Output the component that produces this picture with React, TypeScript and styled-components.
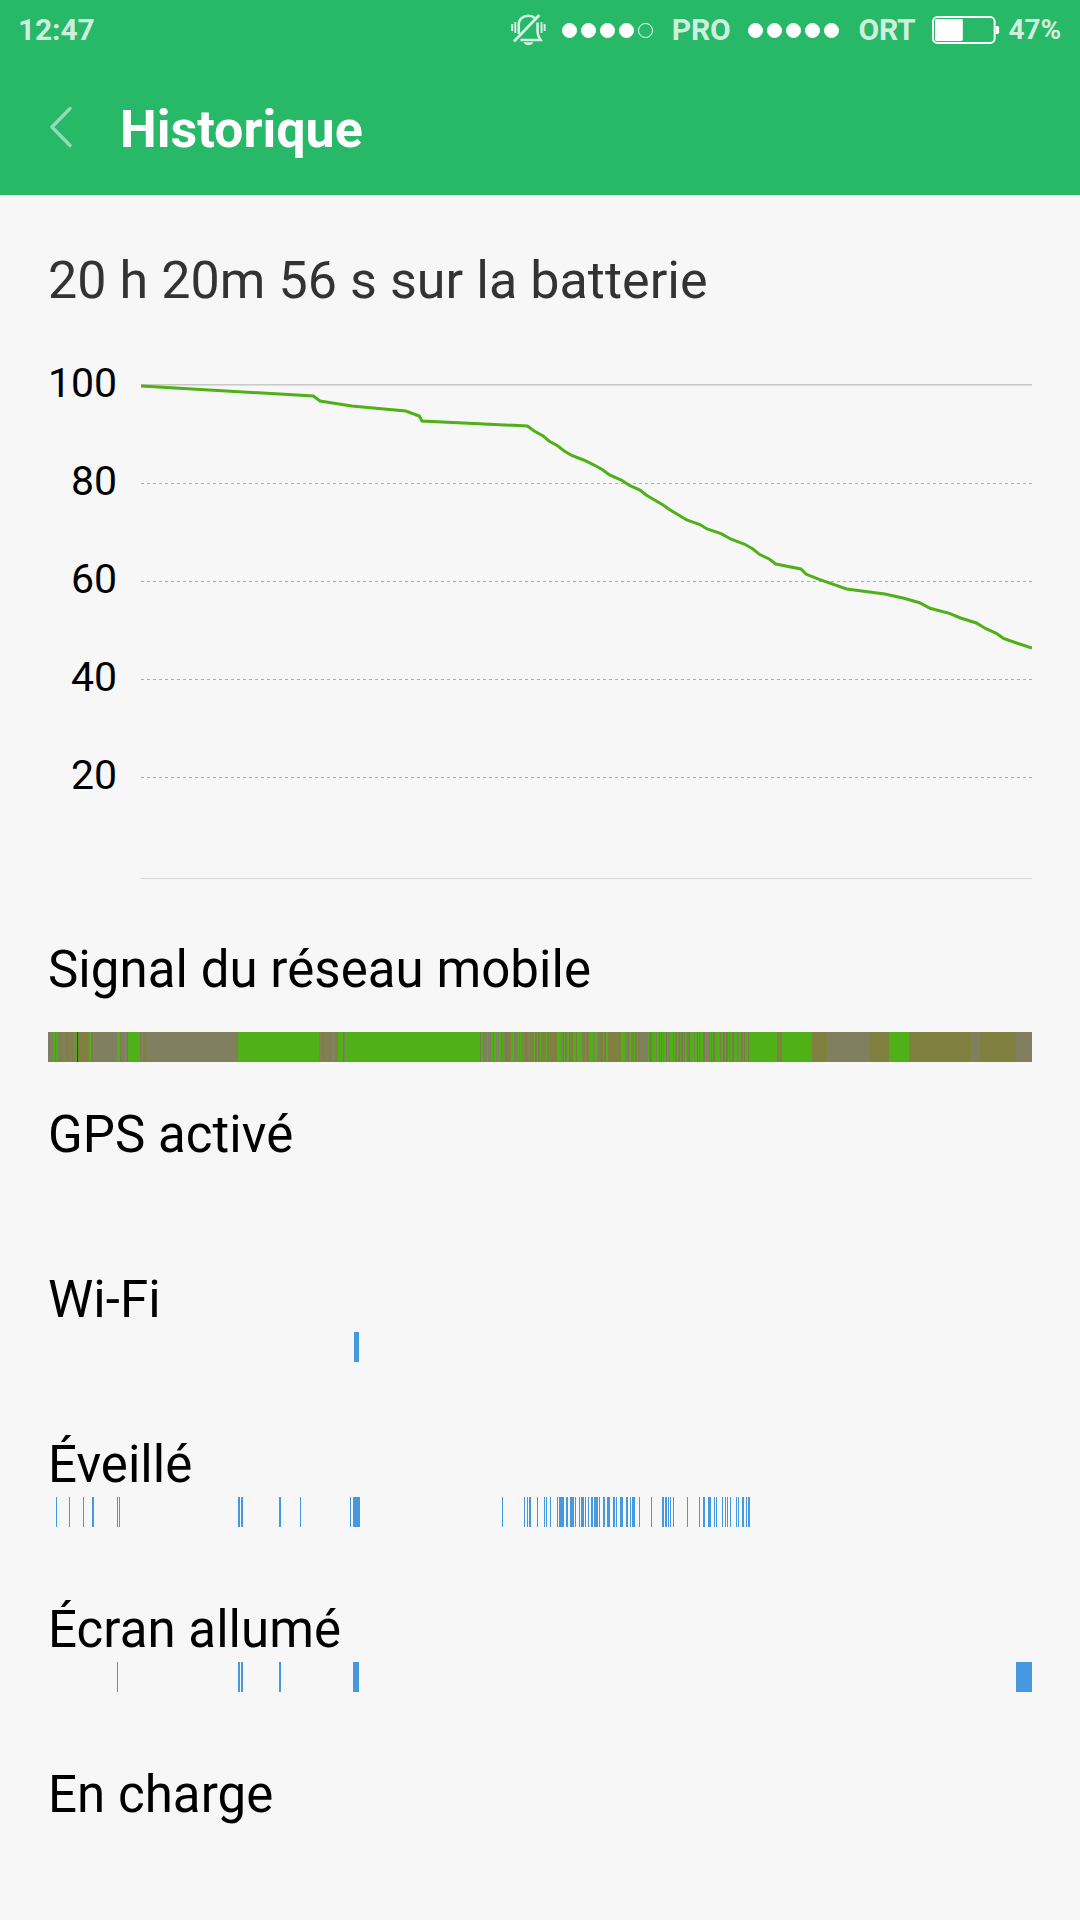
import React from "react";
import styled, { createGlobalStyle } from "styled-components";

const Global = createGlobalStyle`
  body { margin: 0; background: #f7f7f7; }
  * { box-sizing: border-box; }
`;

const Screen = styled.div`
  width: 1080px;
  height: 1920px;
  overflow: hidden;
  background: #f7f7f7;
  font-family: Roboto, "Liberation Sans", sans-serif;
  color: #000;
`;

const Header = styled.header`
  height: 195px;
  background: #27b868;
  display: flex;
  flex-direction: column;
`;

const StatusBar = styled.div`
  height: 60px;
  padding: 0 19px 0 18px;
  display: flex;
  align-items: center;
`;

const StatusText = styled.span<{ $size?: number; $w?: number; $ml?: number }>`
  font-size: ${(p) => p.$size ?? 30}px;
  line-height: 36px;
  font-weight: 700;
  letter-spacing: -0.15px;
  color: rgba(255, 255, 255, 0.8);
  width: ${(p) => (p.$w ? `${p.$w}px` : "auto")};
  margin-left: ${(p) => p.$ml ?? 0}px;
  white-space: nowrap;
`;

const StatusIcons = styled.div`
  margin-left: auto;
  width: 550px;
  display: flex;
  align-items: center;
`;

const Dots = styled.div<{ $ml: number }>`
  margin-left: ${(p) => p.$ml}px;
  display: flex;
  gap: 4px;
`;

const Dot = styled.i<{ $on: boolean }>`
  width: 15px;
  height: 15px;
  border-radius: 50%;
  border: 1px solid #fff;
  background: ${(p) => (p.$on ? "#fff" : "transparent")};
`;

const TitleBar = styled.div`
  height: 135px;
  padding-left: 50px;
  display: flex;
  align-items: center;
`;

const Title = styled.h1`
  margin: 5px 0 0 45px;
  font-size: 52px;
  line-height: 62px;
  font-weight: 700;
  color: #fff;
`;

const Content = styled.main`
  padding: 0 48px;
`;

const Summary = styled.h2`
  margin: 0;
  padding-top: 56px;
  height: 161px;
  font-size: 52px;
  letter-spacing: 0.07px;
  line-height: 60px;
  font-weight: 400;
  color: #333;
  white-space: nowrap;
`;

const ChartRow = styled.section`
  display: flex;
  gap: 24px;
  height: 584px;
`;

const Axis = styled.div`
  width: 69px;
  padding-top: 2px;
  display: flex;
  flex-direction: column;
`;

const AxisLabel = styled.span`
  height: 98px;
  font-size: 41px;
  line-height: 50px;
  text-align: right;
  white-space: nowrap;
`;

const Plot = styled.svg`
  display: block;
  margin-top: 24px;
`;

const Section = styled.section<{ $h: number }>`
  height: ${(p) => p.$h}px;
  display: flex;
  flex-direction: column;
`;

const Label = styled.h3<{ $gap: number }>`
  margin: 0 0 ${(p) => p.$gap}px;
  font-size: 51px;
  letter-spacing: 0.05px;
  line-height: 60px;
  font-weight: 400;
  white-space: nowrap;
`;

const Track = styled.svg`
  display: block;
  flex: none;
`;

const MuteIcon = () => (
  <svg width="35" height="32" viewBox="0 0 35 32" fill="none" stroke="#d4f1e1" strokeWidth="2.6">
    <path d="M1.2 10v7" strokeWidth="2" />
    <path d="M4.3 8v11" strokeWidth="2" />
    <path d="M33.8 10v7" strokeWidth="2" />
    <path d="M30.7 8v11" strokeWidth="2" />
    <path d="M7.8 20V11C7.8 5 12 1.6 17.4 1.6c2.8 0 5 .8 6.6 2.3" />
    <path d="M26.7 8.5V18c0 3.5 1.2 5.500 3 8H9.500" />
    <path d="M3 27.500L28.500 1" strokeWidth="2.8" />
    <path d="M12.500 28.400h10c-1 1.900-2.800 2.900-5 2.900s-4-1-5-2.900z" fill="#d4f1e1" stroke="none" />
  </svg>
);

const BatteryIcon = () => (
  <svg width="68" height="28" viewBox="0 0 68 28">
    <rect x="1" y="1" width="62" height="26" rx="4.500" fill="none" stroke="#fff" strokeWidth="2" />
    <rect x="3" y="3" width="28" height="22" rx="1.500" fill="#fff" />
    <path d="M64 10h2a1.500 1.500 0 0 1 1.500 1.500v5a1.500 1.500 0 0 1-1.500 1.500h-2z" fill="#fff" />
  </svg>
);

const BackIcon = () => (
  <svg width="25" height="45" viewBox="0 0 25 45" fill="none">
    <path d="M20 3.500L2 22l18 18.500" stroke="#93dbb3" strokeWidth="3.4" strokeLinecap="round" strokeLinejoin="round" />
  </svg>
);

const CURVE: [number, number][] = [
  [141, 386], [313.3, 396], [320, 401], [351.7, 406], [405.7, 411], [419.3, 416], [422, 421],
  [527.4, 426], [534.2, 431], [542.7, 435.7], [549, 441], [557.5, 445.7], [564.3, 451],
  [571.7, 455.5], [583.6, 460], [594.7, 465.3], [602.5, 469.7], [609.6, 475], [621.8, 480.3],
  [629.5, 485.5], [640, 490], [646.1, 495], [654.5, 500], [662.7, 504.7], [669.8, 509.7],
  [678.2, 514.7], [686.7, 520], [699.9, 524.5], [707, 529], [721.1, 533.7], [730.6, 539],
  [744.8, 544.3], [752.9, 549], [759.4, 554.3], [769.2, 559], [775.9, 564], [800.9, 569],
  [806.3, 574.3], [819.2, 579.3], [846.6, 589], [884.8, 594], [904, 598.3], [919.6, 602.7],
  [930, 608.3], [949.4, 613.3], [960.5, 618], [976.4, 623], [985.9, 628.7], [996.3, 633.3],
  [1003.4, 638.3], [1016.6, 643], [1032, 648],
];

const LevelChart = () => (
  <Plot width="891" height="500" viewBox="141 380 891 500">
    <rect x="141" y="384" width="891" height="1.500" fill="#c8c8c8" />
    {[483.5, 581.5, 679.5, 777.5].map((y) => (
      <path key={y} d={`M141 ${y}H1032`} stroke="#aaa" strokeWidth="1" strokeDasharray="3 3" />
    ))}
    <rect x="141" y="878" width="891" height="1" fill="#d5d5d5" />
    <polyline points={CURVE.map((p) => p.join(",")).join(" ")} fill="none" stroke="#4fb017" strokeWidth="3" />
  </Plot>
);

const TONES: Record<string, string> = {
  g: "#4fb018",
  y: "#808060",
  o: "#808040",
  b: "#807850",
  r: "#a01000",
};

// Signal strength: each entry is a tone and the x at which it ends.
const SIGNAL =
  "y53 g55 b56 g57 y59 o62 y66 o69 y72 o73 y76 g77 r78 o89 g91 o92 b93 g94 y117 g120 b121 y125 g126 y127 b128 g140 b141 y144 o146 y238 " +
  "g319 y322 o325 y329 o331 y333 g334 y336 o337 y338 g343 b344 y345 g480 b481 g483 y487 g488 y491 g493 y494 g496 y497 g498 y499 g501 b502 g503 y505 b507 o511 " +
  "g514 y518 g519 y520 g521 y524 o528 y530 o534 g535 b537 g538 b540 g541 o546 g547 o557 g561 y563 b564 g565 b567 g569 b570 o573 g576 b577 g582 y583 o585 g586 " +
  "o589 g593 y595 g597 y599 o603 g604 b606 g608 o621 g625 y628 b629 g631 o634 g635 b637 g638 o640 y648 " +
  "g649 b652 g656 y657 g659 b660 g661 b662 g663 y664 g666 b667 g668 y670 g673 b674 g675 b677 g678 b680 g681 b683 g684 b685 g687 b690 g694 y695 g697 b698 " +
  "g699 b700 g703 b705 g706 y707 g708 y710 g711 b712 g713 b715 g720 b721 g723 b725 g726 b728 g729 b730 g732 b734 g737 y739 g741 b743 g744 b745 g748 b749 " +
  "g777 o782 g812 o827 y869 o889 g909 o971 y980 o1016 y1032";

const segments = SIGNAL.split(" ").map((s, i, all) => {
  const start = i === 0 ? 48 : Number(all[i - 1].slice(1));
  return { start, width: Number(s.slice(1)) - start, fill: TONES[s[0]] };
});

type Tick = [number, number];
const expand = (s: string): Tick[] =>
  s.split(" ").map((t) => {
    const [x, w] = t.split(":");
    return [Number(x), Number(w ?? 1)];
  });

const AWAKE = expand(
  "56 69 83 92:2 117 119 238:2 241:2 279:2 300 350 353:7 502 524 527 529:2 537 544 546 550 557 559:5 566:2 570:4 575 579 581:3 585 588 591:2 594:4 599 603:2 607:3 613:2 616 620:3 626:2 630 632:3 639 651 662:2 665:2 668 670 673 687 699 703:2 708:3 714 716 722 725 727 730 736 738 742:2 746 748:2"
);
const SCREEN_ON = expand("117 238:2 241:2 279:2 353:6 1016:16");
const WIFI = expand("354:5");

const Timeline = ({ ticks }: { ticks: Tick[] }) => (
  <Track width="984" height="30" viewBox="48 0 984 30" shapeRendering="crispEdges">
    {ticks.map(([x, w]) => (
      <rect key={x} x={x} y="0" width={w} height="30" fill="#4699e0" />
    ))}
  </Track>
);

const ROWS: { label: string; ticks: Tick[] }[] = [
  { label: "GPS activé", ticks: [] },
  { label: "Wi-Fi", ticks: WIFI },
  { label: "Éveillé", ticks: AWAKE },
  { label: "Écran allumé", ticks: SCREEN_ON },
  { label: "En charge", ticks: [] },
];

const SignalDots = ({ level, ml }: { level: number; ml: number }) => (
  <Dots $ml={ml}>
    {[1, 2, 3, 4, 5].map((n) => (
      <Dot key={n} $on={n <= level} />
    ))}
  </Dots>
);

export default function App() {
  return (
    <Screen>
      <Global />
      <Header>
        <StatusBar>
          <StatusText>12:47</StatusText>
          <StatusIcons>
            <MuteIcon />
            <SignalDots level={4} ml={16} />
            <StatusText $ml={19} $w={77}>PRO</StatusText>
            <SignalDots level={5} ml={0} />
            <StatusText $ml={19} $w={74}>ORT</StatusText>
            <BatteryIcon />
            <StatusText $ml={9} $size={28}>47%</StatusText>
          </StatusIcons>
        </StatusBar>
        <TitleBar>
          <BackIcon />
          <Title>Historique</Title>
        </TitleBar>
      </Header>
      <Content>
        <Summary>20 h 20m 56 s sur la batterie</Summary>
        <ChartRow>
          <Axis>
            {[100, 80, 60, 40, 20].map((n) => (
              <AxisLabel key={n}>{n}</AxisLabel>
            ))}
          </Axis>
          <LevelChart />
        </ChartRow>
        <Section $h={165}>
          <Label $gap={32}>Signal du réseau mobile</Label>
          <Track width="984" height="30" viewBox="48 0 984 30" shapeRendering="crispEdges">
            {segments.map((s) => (
              <rect key={s.start} x={s.start} y="0" width={s.width} height="30" fill={s.fill} />
            ))}
          </Track>
        </Section>
        {ROWS.map((r) => (
          <Section key={r.label} $h={165}>
            <Label $gap={2}>{r.label}</Label>
            <Timeline ticks={r.ticks} />
          </Section>
        ))}
      </Content>
    </Screen>
  );
}
